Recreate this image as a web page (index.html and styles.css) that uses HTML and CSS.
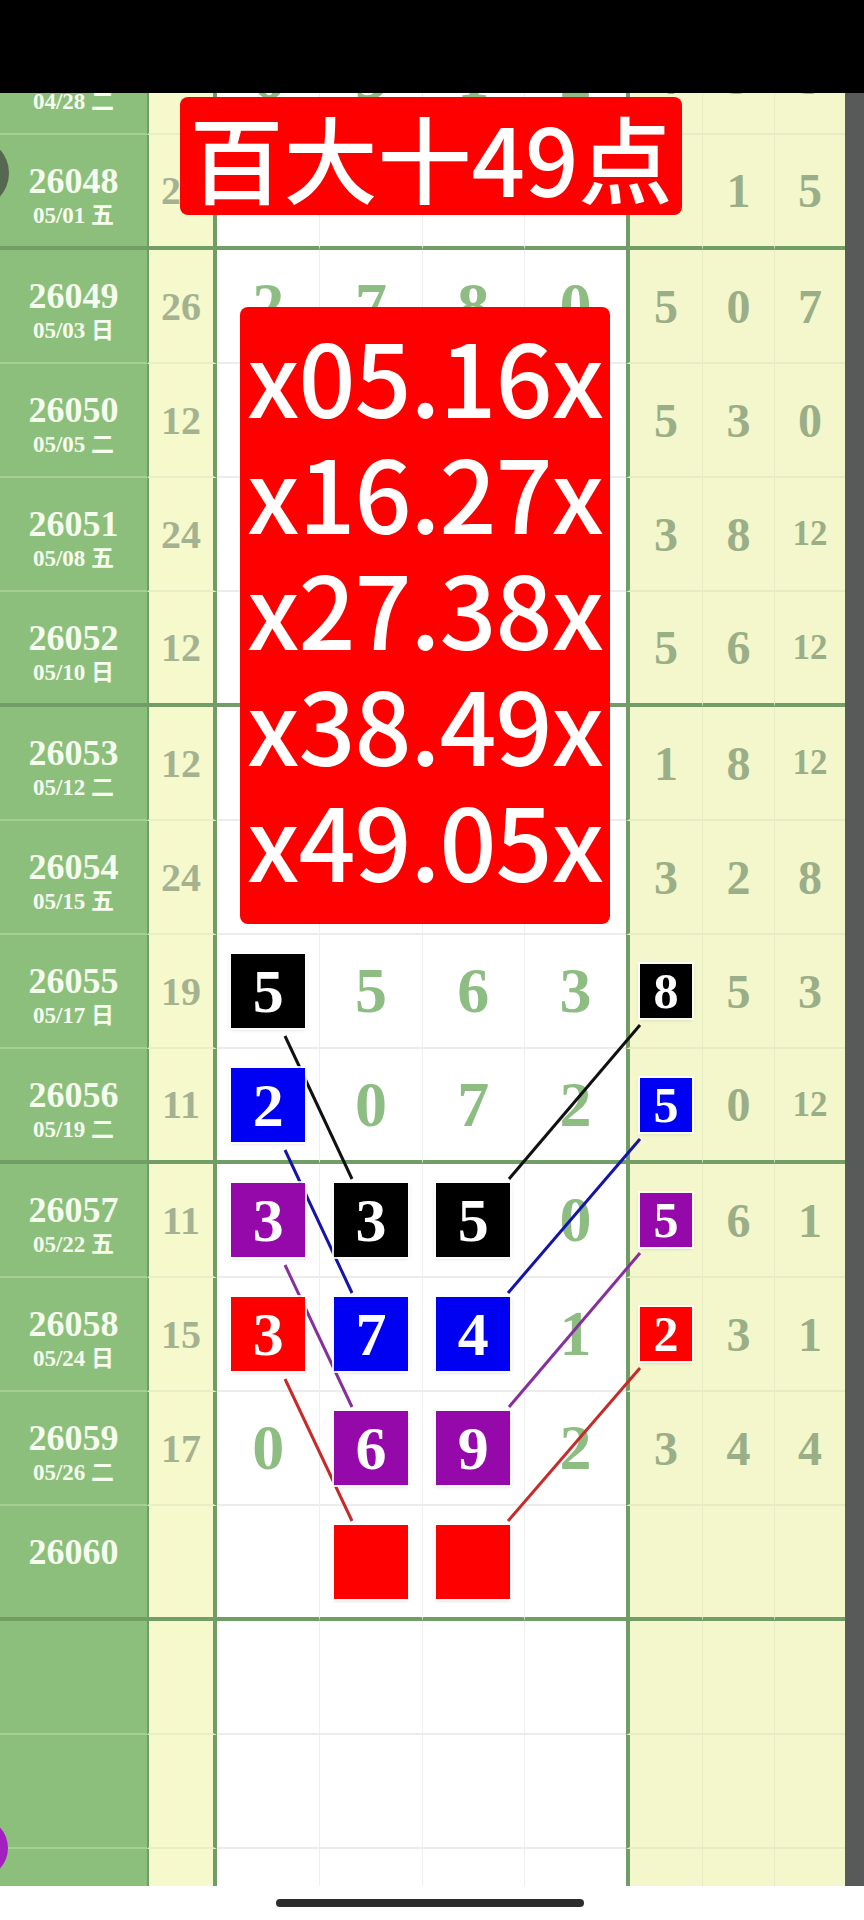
FILE: index.html
```html
<!DOCTYPE html>
<html lang="zh-CN">
  <head>
    <meta charset="UTF-8" />
    <meta name="viewport" content="width=device-width, initial-scale=1.0" />
    <title>走势图</title>
    <link rel="stylesheet" href="styles.css">
  </head>
  <body>
    <div class="statusbar"></div>
    <div class="screen">
      <div class="sheet">
        <div class="row">
          <div class="c-no"><b>26047</b><i>04/28 二</i></div>
          <div class="c-sum">13</div>
          <div class="c-w">6</div><div class="c-w">3</div><div class="c-w">1</div><div class="c-w">2</div>
          <div class="c-r">4</div><div class="c-r">3</div><div class="c-r">5</div>
          <div class="c-edge"></div>
        </div>
        <div class="row end">
          <div class="c-no"><b>26048</b><i>05/01 五</i></div>
          <div class="c-sum">24</div>
          <div class="c-w"></div><div class="c-w"></div><div class="c-w"></div><div class="c-w"></div>
          <div class="c-r">4</div><div class="c-r">1</div><div class="c-r">5</div>
          <div class="c-edge"></div>
        </div>

        <div class="row">
          <div class="c-no"><b>26049</b><i>05/03 日</i></div>
          <div class="c-sum">26</div>
          <div class="c-w">2</div><div class="c-w">7</div><div class="c-w">8</div><div class="c-w">0</div>
          <div class="c-r">5</div><div class="c-r">0</div><div class="c-r">7</div>
          <div class="c-edge"></div>
        </div>
        <div class="row">
          <div class="c-no"><b>26050</b><i>05/05 二</i></div>
          <div class="c-sum">12</div>
          <div class="c-w"></div><div class="c-w"></div><div class="c-w"></div><div class="c-w"></div>
          <div class="c-r">5</div><div class="c-r">3</div><div class="c-r">0</div>
          <div class="c-edge"></div>
        </div>
        <div class="row">
          <div class="c-no"><b>26051</b><i>05/08 五</i></div>
          <div class="c-sum">24</div>
          <div class="c-w"></div><div class="c-w"></div><div class="c-w"></div><div class="c-w"></div>
          <div class="c-r">3</div><div class="c-r">8</div><div class="c-r small">12</div>
          <div class="c-edge"></div>
        </div>
        <div class="row end">
          <div class="c-no"><b>26052</b><i>05/10 日</i></div>
          <div class="c-sum">12</div>
          <div class="c-w"></div><div class="c-w"></div><div class="c-w"></div><div class="c-w"></div>
          <div class="c-r">5</div><div class="c-r">6</div><div class="c-r small">12</div>
          <div class="c-edge"></div>
        </div>

        <div class="row">
          <div class="c-no"><b>26053</b><i>05/12 二</i></div>
          <div class="c-sum">12</div>
          <div class="c-w"></div><div class="c-w"></div><div class="c-w"></div><div class="c-w"></div>
          <div class="c-r">1</div><div class="c-r">8</div><div class="c-r small">12</div>
          <div class="c-edge"></div>
        </div>
        <div class="row">
          <div class="c-no"><b>26054</b><i>05/15 五</i></div>
          <div class="c-sum">24</div>
          <div class="c-w"></div><div class="c-w"></div><div class="c-w"></div><div class="c-w"></div>
          <div class="c-r">3</div><div class="c-r">2</div><div class="c-r">8</div>
          <div class="c-edge"></div>
        </div>
        <div class="row">
          <div class="c-no"><b>26055</b><i>05/17 日</i></div>
          <div class="c-sum">19</div>
          <div class="c-w"><span class="box black">5</span></div><div class="c-w">5</div><div class="c-w">6</div><div class="c-w">3</div>
          <div class="c-r"><span class="box sm black">8</span></div><div class="c-r">5</div><div class="c-r">3</div>
          <div class="c-edge"></div>
        </div>
        <div class="row end">
          <div class="c-no"><b>26056</b><i>05/19 二</i></div>
          <div class="c-sum">11</div>
          <div class="c-w"><span class="box blue">2</span></div><div class="c-w">0</div><div class="c-w">7</div><div class="c-w">2</div>
          <div class="c-r"><span class="box sm blue">5</span></div><div class="c-r">0</div><div class="c-r small">12</div>
          <div class="c-edge"></div>
        </div>

        <div class="row">
          <div class="c-no"><b>26057</b><i>05/22 五</i></div>
          <div class="c-sum">11</div>
          <div class="c-w"><span class="box purple">3</span></div><div class="c-w"><span class="box black">3</span></div><div class="c-w"><span class="box black">5</span></div><div class="c-w">0</div>
          <div class="c-r"><span class="box sm purple">5</span></div><div class="c-r">6</div><div class="c-r">1</div>
          <div class="c-edge"></div>
        </div>
        <div class="row">
          <div class="c-no"><b>26058</b><i>05/24 日</i></div>
          <div class="c-sum">15</div>
          <div class="c-w"><span class="box red">3</span></div><div class="c-w"><span class="box blue">7</span></div><div class="c-w"><span class="box blue">4</span></div><div class="c-w">1</div>
          <div class="c-r"><span class="box sm red">2</span></div><div class="c-r">3</div><div class="c-r">1</div>
          <div class="c-edge"></div>
        </div>
        <div class="row">
          <div class="c-no"><b>26059</b><i>05/26 二</i></div>
          <div class="c-sum">17</div>
          <div class="c-w">0</div><div class="c-w"><span class="box purple">6</span></div><div class="c-w"><span class="box purple">9</span></div><div class="c-w">2</div>
          <div class="c-r">3</div><div class="c-r">4</div><div class="c-r">4</div>
          <div class="c-edge"></div>
        </div>
        <div class="row end">
          <div class="c-no"><b>26060</b><i>&nbsp;</i></div>
          <div class="c-sum"></div>
          <div class="c-w"></div><div class="c-w"><span class="box red"></span></div><div class="c-w"><span class="box red"></span></div><div class="c-w"></div>
          <div class="c-r"></div><div class="c-r"></div><div class="c-r"></div>
          <div class="c-edge"></div>
        </div>

        <div class="row">
          <div class="c-no"></div><div class="c-sum"></div>
          <div class="c-w"></div><div class="c-w"></div><div class="c-w"></div><div class="c-w"></div>
          <div class="c-r"></div><div class="c-r"></div><div class="c-r"></div>
          <div class="c-edge"></div>
        </div>
        <div class="row">
          <div class="c-no"></div><div class="c-sum"></div>
          <div class="c-w"></div><div class="c-w"></div><div class="c-w"></div><div class="c-w"></div>
          <div class="c-r"></div><div class="c-r"></div><div class="c-r"></div>
          <div class="c-edge"></div>
        </div>
        <div class="row">
          <div class="c-no"></div><div class="c-sum"></div>
          <div class="c-w"></div><div class="c-w"></div><div class="c-w"></div><div class="c-w"></div>
          <div class="c-r"></div><div class="c-r"></div><div class="c-r"></div>
          <div class="c-edge"></div>
        </div>
      </div>

      <!-- linhas de ligação, coordenadas da página -->
      <svg class="links" width="864" height="1793" viewBox="0 93 864 1793">
        <line x1="285" y1="1036" x2="352" y2="1179" stroke="#111" />
        <line x1="640" y1="1025" x2="509" y2="1179" stroke="#111" />
        <line x1="285" y1="1150" x2="352" y2="1293" stroke="#1414a8" />
        <line x1="640" y1="1139" x2="508" y2="1293" stroke="#1414a8" />
        <line x1="285" y1="1265" x2="352" y2="1407" stroke="#86309c" />
        <line x1="640" y1="1253" x2="509" y2="1407" stroke="#86309c" />
        <line x1="285" y1="1379" x2="352" y2="1521" stroke="#c62a2a" />
        <line x1="640" y1="1368" x2="508" y2="1521" stroke="#c62a2a" />
      </svg>

      <div class="tag tag-title">百大十49点</div>
      <div class="tag tag-list">
        <p>x05.16x</p>
        <p>x16.27x</p>
        <p>x27.38x</p>
        <p>x38.49x</p>
        <p>x49.05x</p>
      </div>

      <span class="blob blob-grey"></span>
      <span class="blob blob-purple"></span>
    </div>
    <div class="homebar"><span></span></div>
  </body>
</html>
```

FILE: styles.css
```css
/* planilha de tendência */
body {
  margin: 0;
  padding: 0;
  width: 864px;
  background: #fff;
  font-family: "Liberation Serif", "Noto Sans CJK SC", serif;
}

.statusbar {
  height: 93px;
  background: #000;
}

.screen {
  position: relative;
  height: 1793px;
  overflow: hidden;
}

.sheet {
  margin-top: -72px;
}

.row {
  display: grid;
  grid-template-columns: 147px 70px repeat(4, 1fr) 76px 72px 71px 19px;
  height: 114px;
}

.row.end {
  height: 115px;
}

.row > div {
  box-sizing: border-box;
  display: flex;
  align-items: center;
  justify-content: center;
  font-weight: bold;
  border-bottom: 2px solid #ececec;
}

.row.end > div {
  border-bottom: 4px solid #739d66;
}

.c-no {
  flex-direction: column;
  background: #8cbf7c;
  color: #f6fcee;
  padding-top: 10px;
}

.row > .c-no {
  border-bottom-color: #a4cf95;
}

.c-no b {
  font-size: 36px;
  line-height: 40px;
}

.c-no i {
  font-style: normal;
  font-size: 23px;
  line-height: 30px;
}

.c-sum {
  background: #f5f9cc;
  border-left: 2px solid #729c66;
  border-right: 4px solid #729c66;
  color: #a5b291;
  font-size: 40px;
}

.row > .c-sum {
  border-bottom-color: #e8eec6;
}

.c-w {
  background: #fff;
  color: #8dbd82;
  font-size: 64px;
  border-left: 1px solid #efefef;
}

.c-sum + .c-w {
  border-left: 0;
}

.c-r {
  background: #f3f7cb;
  color: #9aae88;
  font-size: 48px;
  border-left: 1px solid #e6ecc3;
}

.row > .c-r {
  border-bottom-color: #e6ecc3;
}

.c-w + .c-r {
  border-left: 4px solid #729c66;
}

.c-r.small {
  font-size: 35px;
}

.row > .c-edge,
.row.end > .c-edge {
  background: #575a59;
  border-bottom-color: #575a59;
}

.box {
  position: relative;
  z-index: 2;
  width: 74px;
  height: 74px;
  display: flex;
  align-items: center;
  justify-content: center;
  color: #fff;
  font-size: 62px;
  line-height: 1;
  box-shadow: 0 0 0 2px rgba(255, 255, 255, 0.85), 0 1px 4px rgba(0, 0, 0, 0.25);
}

.box.sm {
  width: 52px;
  height: 54px;
  font-size: 50px;
}

.black {
  background: #000;
}

.blue {
  background: #0000f2;
}

.purple {
  background: #9509ab;
}

.red {
  background: #ff0000;
}

.links {
  position: absolute;
  left: 0;
  top: 0;
  z-index: 1;
  stroke-width: 3;
}

.tag {
  position: absolute;
  z-index: 3;
  background: #ff0000;
  color: #fff;
  border-radius: 8px;
  font-family: "Noto Sans CJK SC", "Noto Sans", sans-serif;
  font-weight: 500;
}

.tag-title {
  left: 180px;
  top: 4px;
  width: 502px;
  height: 118px;
  display: flex;
  align-items: center;
  justify-content: center;
  font-size: 94px;
  line-height: 1;
}

.tag-list {
  left: 240px;
  top: 214px;
  width: 370px;
  height: 617px;
  box-sizing: border-box;
  padding-top: 10px;
  text-align: center;
}

.tag-list p {
  margin: 0;
  font-size: 100px;
  line-height: 116px;
  letter-spacing: -1px;
}

.blob {
  position: absolute;
  border-radius: 50%;
}

.blob-grey {
  left: -61px;
  top: 45px;
  width: 70px;
  height: 70px;
  background: #56684f;
}

.blob-purple {
  left: -52px;
  top: 1725px;
  width: 60px;
  height: 60px;
  background: #a41fc0;
}

.homebar {
  height: 34px;
  background: #fff;
  position: relative;
}

.homebar span {
  position: absolute;
  left: 276px;
  top: 13px;
  width: 308px;
  height: 8px;
  border-radius: 4px;
  background: #2d2d2d;
}
```
